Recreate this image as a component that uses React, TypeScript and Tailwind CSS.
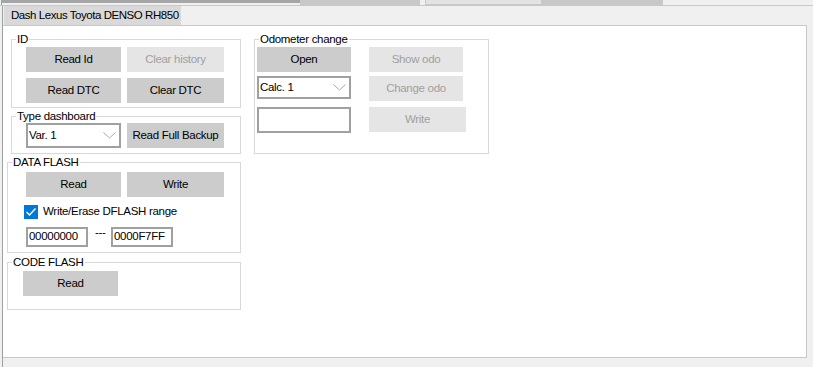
import type { ReactNode } from 'react';

function Btn({ label, disabled, className = '' }: { label: string; disabled?: boolean; className?: string }) {
  return (
    <div
      className={`flex h-[25px] items-center justify-center ${
        disabled ? 'bg-[#e5e5e5] text-[#a0a0a0]' : 'bg-[#cccccc] text-black'
      } ${className}`}
    >
      {label}
    </div>
  );
}

function Combo({ value, className = '' }: { value: string; className?: string }) {
  return (
    <div className={`flex items-center justify-between border-2 border-[#a0a0a0] bg-white pl-[1px] pr-[3px] ${className}`}>
      <span>{value}</span>
      <svg width="13" height="7" viewBox="0 0 13 7">
        <polyline points="0.5,0.5 6.5,6 12.5,0.5" fill="none" stroke="#a8a8a8" strokeWidth="1" />
      </svg>
    </div>
  );
}

function Group({
  label,
  className = '',
  inner = '',
  children,
}: {
  label: string;
  className?: string;
  inner?: string;
  children: ReactNode;
}) {
  return (
    <fieldset className={`border border-[#d9d9d9] ${className}`}>
      <legend className="ml-[4px] px-px leading-[14px]">{label}</legend>
      <div className={inner}>{children}</div>
    </fieldset>
  );
}

export default function App() {
  return (
    <div
      className="flex h-[367px] w-[813px] flex-col overflow-hidden whitespace-nowrap bg-[#f0f0f0] text-[11.5px] tracking-[-0.3px] text-black"
      style={{ fontFamily: '"Liberation Sans", Arial, sans-serif' }}
    >
      {/* cut-off tab strip above */}
      <div className="flex h-[6px] shrink-0 border-b border-[#c8c8c8]">
        <div className="w-[2px] border-r border-[#a0a0a0]" />
        <div className="w-[298px]">
          <div className="h-[3px] bg-[#a6a6a6]" />
        </div>
        <div className="w-[120px] bg-[#c8c8c8]" />
        <div className="w-[5px]" />
        <div className="w-[117px] border-x border-b border-[#c8c8c8] bg-[#e3e3e3]" />
        <div className="w-[120px] bg-[#c8c8c8]" />
        <div className="flex-1 border-l border-[#c8c8c8]" />
      </div>

      <div className="ml-[2px] flex flex-1 flex-col border-l border-[#a0a0a0]">
        {/* tabs */}
        <div className="flex h-[19px] shrink-0 pl-[1px]">
          <div className="flex w-[177px] shrink-0 items-center overflow-hidden bg-[#d9d9d9] pl-[7px] tracking-[-0.45px]">
            Dash Lexus Toyota DENSO RH850
          </div>
        </div>

        {/* tab page */}
        <div className="flex h-[333px] w-[804px] border-y border-r border-[#c8c8c8] bg-white pl-[4px] pt-[6px]">
          {/* left column */}
          <div className="flex w-[234px] flex-col">
            <Group label="ID" className="ml-[4px] w-[230px]" inner="pb-[4px] pl-[14px] pt-px">
              <div className="flex gap-[6px]">
                <Btn label="Read Id" className="w-[95px]" />
                <Btn label="Clear history" disabled className="w-[97px]" />
              </div>
              <div className="mt-[6px] flex gap-[6px]">
                <Btn label="Read DTC" className="w-[95px]" />
                <Btn label="Clear DTC" className="w-[97px]" />
              </div>
            </Group>

            <Group label="Type dashboard" className="ml-[4px] mt-px w-[230px]" inner="pb-[5px] pl-[14px]">
              <div className="flex gap-[6px]">
                <Combo value="Var. 1" className="h-[25px] w-[95px]" />
                <Btn label="Read Full Backup" className="w-[97px]" />
              </div>
            </Group>

            <Group label="DATA FLASH" className="mt-px w-[234px]" inner="pb-[5px] pl-[18px] pt-[3px]">
              <div className="flex gap-[6px]">
                <Btn label="Read" className="w-[95px]" />
                <Btn label="Write" className="w-[97px]" />
              </div>
              <div className="-ml-[2px] mt-[7px] flex h-[15px] items-center gap-[5px]">
                <div className="flex h-[14px] w-[14px] items-center justify-center bg-[#0078d7]">
                  <svg width="12" height="12" viewBox="0 0 12 12">
                    <polyline points="1.5,6 4.5,9 10.5,2.5" fill="none" stroke="#ffffff" strokeWidth="1.4" />
                  </svg>
                </div>
                <span>Write/Erase DFLASH range</span>
              </div>
              <div className="mt-[8px] flex items-start">
                <div className="flex h-[20px] w-[62px] items-center border-2 border-[#a0a0a0] pl-px">00000000</div>
                <span className="ml-[7px] w-[16px] leading-[10px]">---</span>
                <div className="flex h-[20px] w-[62px] items-center border-2 border-[#a0a0a0] pl-px">0000F7FF</div>
              </div>
            </Group>

            <Group label="CODE FLASH" className="mt-[2px] w-[234px]" inner="pb-[13px] pl-[15px] pt-[2px]">
              <Btn label="Read" className="w-[95px]" />
            </Group>
          </div>

          {/* right column */}
          <Group label="Odometer change" className="ml-[13px] h-[122px] w-[235px]" inner="pl-[2px] pt-px">
            <div className="flex gap-[18px]">
              <Btn label="Open" className="w-[94px]" />
              <Btn label="Show odo" disabled className="w-[94px]" />
            </div>
            <div className="mt-[4px] flex items-start gap-[18px]">
              <Combo value="Calc. 1" className="h-[23px] w-[94px]" />
              <Btn label="Change odo" disabled className="w-[94px]" />
            </div>
            <div className="mt-[6px] flex items-start gap-[18px]">
              <div className="h-[26px] w-[94px] border-2 border-[#a0a0a0]" />
              <Btn label="Write" disabled className="w-[97px]" />
            </div>
          </Group>
        </div>
      </div>
    </div>
  );
}
